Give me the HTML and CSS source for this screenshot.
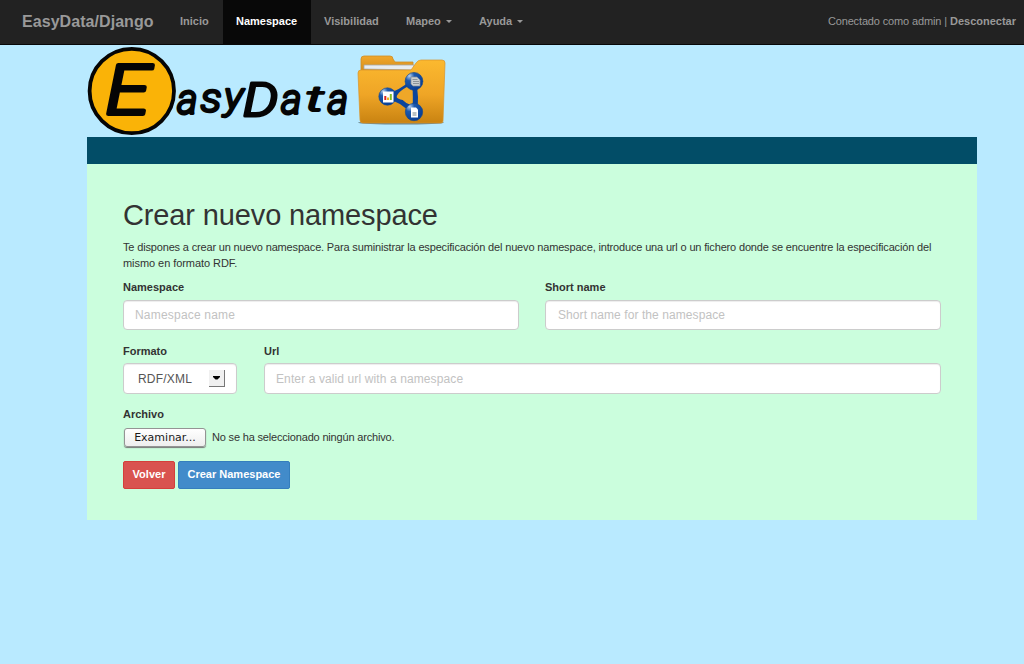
FILE: index.html
```html
<!DOCTYPE html>
<html lang="es">
<head>
<meta charset="utf-8">
<title>EasyData/Django</title>
<link rel="stylesheet" href="styles.css">
</head>
<body>
<nav class="navbar">
  <a class="brand">EasyData/Django</a>
  <a class="nav-item inicio">Inicio</a>
  <a class="nav-item active">Namespace</a>
  <a class="nav-item visibilidad">Visibilidad</a>
  <a class="nav-item mapeo">Mapeo <i class="caret"></i></a>
  <a class="nav-item ayuda">Ayuda <i class="caret"></i></a>
  <p class="session"><span class="who">Conectado como admin |</span> <b>Desconectar</b></p>
</nav>
<div class="container">
  <header class="logo">
    <svg width="360" height="92" viewBox="87 45 360 92">
      <defs>
        <linearGradient id="front" x1="0" y1="0" x2="0" y2="1"><stop offset="0" stop-color="#fbb92f"/><stop offset=".55" stop-color="#efa526"/><stop offset="1" stop-color="#c98311"/></linearGradient>
        <linearGradient id="back" x1="0" y1="0" x2="0" y2="1"><stop offset="0" stop-color="#f0a72c"/><stop offset="1" stop-color="#d18a18"/></linearGradient>
        <radialGradient id="node" cx=".25" cy=".2" r=".9"><stop offset="0" stop-color="#b7d0ef"/><stop offset=".3" stop-color="#1c59ad"/><stop offset="1" stop-color="#063c93"/></radialGradient>
      </defs>
      <circle cx="131.800" cy="91" r="42.200" fill="#fab307" stroke="#050505" stroke-width="3.800"/>
      <text class="logo-initial" transform="translate(105.500 114) scale(1.180 1)">E</text>
      <g class="logo-word">
        <text transform="translate(177 113.500) scale(.92 1)">a</text>
        <text transform="translate(200.500 112) scale(1 .95)">s</text>
        <text transform="translate(224 109) scale(.98 .86)">y</text>
        <text transform="translate(243 116) scale(1.280 1.080)">D</text>
        <text transform="translate(281 113.500) scale(.92 1)">a</text>
        <text transform="translate(305.500 110.500) scale(1.350 .8)">t</text>
        <text transform="translate(327.500 113.500) scale(.92 1)">a</text>
      </g>
      <ellipse cx="401" cy="122.800" rx="43" ry="1.800" fill="#52676a" opacity=".75"/>
      <path d="M361 73V59q0-3 3-3h26q3 0 3 3l2 3h18v12z" fill="url(#back)" stroke="#cf8d25" stroke-width=".8"/>
      <path d="M364 69V65h50v5z" fill="#e9edef" stroke="#a5a8aa" stroke-width=".8"/>
      <path d="M358 73q0-3 3-3h50l5-7q2-3 5-3h21q3 0 3 3l-2 58q0 2-2 2h-78q-3 0-3-3z" fill="url(#front)" stroke="#d8942a" stroke-width=".7"/>
      <path d="M387 96.500C398 94 405 89 413 82Q417 97 414 113C406 103 398 98 387 96.500Z" fill="none" stroke="#0b459c" stroke-width="5.500"/>
      <path d="M396.500 97q1-4 7-8 4-3 7-2 2 1 2.200 4v11q0 4-4 2-3-1-6-4-5-1-6.200-3z" fill="#efa728"/>
      <circle cx="387.500" cy="96.500" r="8.700" fill="url(#node)" stroke="#12468f" stroke-width=".6"/>
      <circle cx="414" cy="81.300" r="8.900" fill="url(#node)" stroke="#12468f" stroke-width=".6"/>
      <circle cx="414" cy="112" r="8.700" fill="url(#node)" stroke="#12468f" stroke-width=".6"/>
      <path d="M383 91.500h10.500v11h-10.500z" fill="#fff"/>
      <path d="M385.300 100v-4" stroke="#d82423" stroke-width="2"/><path d="M388 100v-2.500" stroke="#f2b21b" stroke-width="2"/><path d="M390.800 100v-6" stroke="#83bd23" stroke-width="2"/>
      <path d="M411 77h6l3 3v6h-7l-2-2z" fill="#c9ced0" stroke="#868e95" stroke-width=".7"/><path d="M412.500 79.500h5M413 81.500h6M413 83.500h6" stroke="#7c858c" stroke-width=".8"/>
      <path d="M411 107.500h5l2 2v8h-7z" fill="#fff"/><path d="M412.500 113h4M412.500 115h4" stroke="#51636b" stroke-width=".8"/>
    </svg>
  </header>
  <div class="band"></div>
  <main class="panel">
    <h1>Crear nuevo namespace</h1>
    <p class="intro"><span class="line1">Te dispones a crear un nuevo namespace. Para suministrar la especificación del nuevo namespace, introduce una url o un fichero donde se encuentre la especificación del</span><br>mismo en formato RDF.</p>
    <form>
      <div class="row halves">
        <div><label>Namespace</label><input class="control name" type="text" placeholder="Namespace name"></div>
        <div><label>Short name</label><input class="control short" type="text" placeholder="Short name for the namespace"></div>
      </div>
      <div class="row source">
        <div><label>Formato</label><div class="control select"><span>RDF/XML</span><span class="arrow"><svg width="7" height="4" viewBox="0 0 7 4"><path d="M0 0h7v1L4.500 3.500h-2L0 1z"/></svg></span></div></div>
        <div><label>Url</label><input class="control url" type="text" placeholder="Enter a valid url with a namespace"></div>
      </div>
      <label>Archivo</label>
      <div class="file"><button type="button" class="browse">Examinar...</button><span class="filename">No se ha seleccionado ningún archivo.</span></div>
      <div class="actions"><button type="button" class="btn danger">Volver</button><button type="button" class="btn primary">Crear Namespace</button></div>
    </form>
  </main>
</div>
</body>
</html>
```
FILE: styles.css
```css
* { box-sizing: border-box; }
body { margin: 0; background: #b9eaff; color: #333; font: 11px/16px "Liberation Sans", Arial, sans-serif; overflow: hidden; }
.navbar { display: flex; height: 45px; padding-left: 22px; background: #222; border-bottom: 1px solid #080808; line-height: 43px; color: #999; white-space: nowrap; }
.brand { width: 145px; font-size: 16px; font-weight: bold; letter-spacing: .06px; }
.nav-item { padding-left: 13px; font-weight: bold; }
.inicio { width: 56px; }
.active { width: 88px; background: #080808; color: #fff; }
.visibilidad { width: 82px; }
.mapeo { width: 73px; }
.ayuda { width: 80px; }
.caret { display: inline-block; margin-left: 2px; vertical-align: 2px; border: 3px solid transparent; border-top-color: #999; border-bottom: 0; }
.session { margin: 0 8px 0 auto; }
.who { letter-spacing: -.14px; }
.container { width: 890px; margin-left: 87px; }
.logo { height: 92px; }
.logo svg { display: block; }
.logo-initial, .logo-word { font-family: Roboto, "DejaVu Sans", sans-serif; font-style: italic; font-weight: 300; fill: #050505; stroke: #050505; stroke-linejoin: round; }
.logo-initial { font-size: 68px; stroke-width: 4px; }
.logo-word { font-size: 43px; stroke-width: 2.8px; }
.band { height: 27px; background: #024d67; }
.panel { height: 356px; padding: 34px 36px 0; background: #cbfedd; }
h1 { margin: 0 0 7px; font-size: 29px; line-height: 34px; font-weight: normal; letter-spacing: -.13px; }
.intro { margin: 0 0 8px; white-space: nowrap; letter-spacing: -.06px; }
.line1 { letter-spacing: -.162px; }
.row { display: grid; }
.halves { grid-template-columns: 396px 396px; column-gap: 26px; height: 64px; }
.source { grid-template-columns: 114px 677px; column-gap: 27px; height: 63px; }
label { display: block; height: 21px; font-weight: bold; }
.control { display: block; width: 100%; height: 30px; padding: 0 11px; border: 1px solid #ccc; border-radius: 4px; background: #fff; box-shadow: inset 0 1px 1px rgba(0,0,0,.075); color: #555; font: 12px "Liberation Sans", Arial, sans-serif; letter-spacing: .11px; }
.control::placeholder { color: #c2c2c2; opacity: 1; }
.name { letter-spacing: .2px; }
.short { padding-left: 12px; letter-spacing: .08px; }
.source label { height: 20px; }
.source .control { height: 31px; }
.source .select { display: flex; align-items: center; justify-content: space-between; padding-left: 14px; letter-spacing: .2px; }
.arrow { display: flex; align-items: center; justify-content: center; width: 16px; height: 17px; background: #f0f0f0; border-right: 1px solid #777; border-bottom: 1px solid #777; }
.arrow svg { fill: #000; }
.file { display: flex; align-items: center; gap: 6px; height: 20px; margin: 0 0 14px 1px; }
.filename { letter-spacing: -.18px; }
.browse { width: 82px; height: 19px; padding: 0; border: 1px solid #949494; border-radius: 3px; background: linear-gradient(#fff, #eee); box-shadow: 0 1px 1px #777; color: #1a1a1a; font: 11px "DejaVu Sans", sans-serif; }
.actions { display: flex; gap: 3px; }
.btn { height: 28px; padding: 0 0 2px; border: 1px solid; border-radius: 2px; color: #fff; font: bold 11px "Liberation Sans", Arial, sans-serif; }
.danger { width: 52px; background: #d9534f; border-color: #d43f3a; }
.primary { width: 112px; background: #428bca; border-color: #357ebd; }
```
